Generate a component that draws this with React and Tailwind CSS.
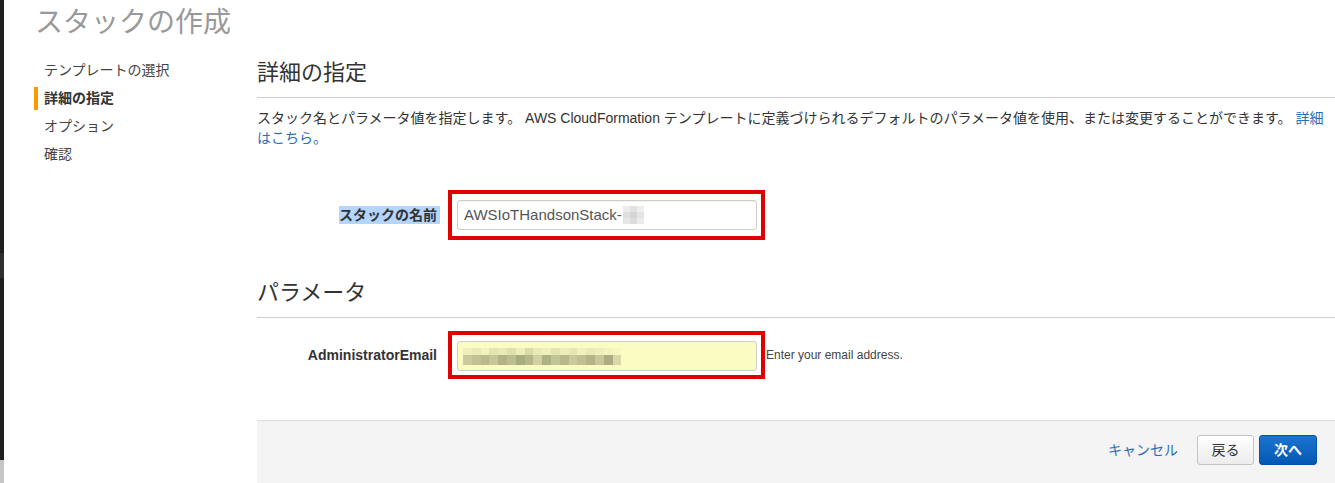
import React from "react"

const stackBlocks = [
  ["#ececec", "#e2e2e2", "#eeeeee"],
  ["#dedede", "#d4d4d4", "#e4e4e4"],
  ["#e6e6e6", "#dcdcdc", "#ebebeb"],
]

const emailTop = [
  "#eef0bb", "#e9ebb6", "#f1f3bd", "#e4e6b0", "#e8eab4", "#dfe1ab", "#eceeb8", "#d9dba6",
  "#e9ebb5", "#eef0ba", "#e3e5af", "#ecedb8", "#e6e8b2", "#f0f2bc", "#e8eab4", "#edefb9",
  "#f2f4be", "#f5f7c0",
]

const emailBottom = [
  "#c9cb9c", "#c0c294", "#b9bb8d", "#c5c798", "#b2b487", "#bcbe90", "#a9ab80", "#b6b88a",
  "#cfd1a2", "#aeb085", "#c3c597", "#b7b98b", "#c8ca9b", "#bfc193", "#b3b588", "#c6c899",
  "#aaac81", "#d6d8aa",
]

function RedFrame({ children, className }) {
  return (
    <div className={`border-4 border-[#e00000] pl-[5px] pr-[4px] ${className}`}>
      {children}
    </div>
  )
}

function Sidebar() {
  const items = ["テンプレートの選択", "詳細の指定", "オプション", "確認"]
  return (
    <aside className="w-[253px] shrink-0 pl-[30px] pt-[15px]">
      {items.map((item, i) => (
        <div key={item} className="flex h-[28px] items-center">
          <div className={`h-[23px] w-[4px] ${i === 1 ? "bg-[#f90]" : ""}`}></div>
          <span
            className={`pl-[6px] text-[14px] leading-[28px] ${
              i === 1 ? "font-bold text-[#333]" : "text-[#444]"
            }`}
          >
            {item}
          </span>
        </div>
      ))}
    </aside>
  )
}

function SectionTitle({ children, className }) {
  return (
    <div className={`border-b border-[#ccc] pb-[9px] ${className}`}>
      <h2 className="text-[22px] leading-[30px] text-[#333]">{children}</h2>
    </div>
  )
}

export default function App() {
  return (
    <div className="flex min-h-[483px] w-[1335px] overflow-hidden bg-white font-['Liberation_Sans','Noto_Sans_CJK_JP',sans-serif]">
      {/* window edge */}
      <div className="flex w-[4px] shrink-0 flex-col">
        <div className="h-[253px] bg-[#1f1f1f]"></div>
        <div className="h-[25px] bg-[#2f2f2f]"></div>
        <div className="h-[182px] bg-[#1f1f1f]"></div>
        <div className="flex-1 bg-[#c6c6c6]"></div>
      </div>

      <div className="flex flex-1 flex-col">
        <h1 className="pl-[31px] pt-[5px] text-[28px] leading-[36px] text-[#999]">スタックの作成</h1>

        <div className="flex flex-1">
          <Sidebar />

          <main className="flex flex-1 flex-col">
            <SectionTitle className="mt-[17px]">詳細の指定</SectionTitle>

            <p className="mt-[10px] pr-[8px] text-[14px] leading-[20px] text-[#333]">
              スタック名とパラメータ値を指定します。 AWS CloudFormation
              テンプレートに定義づけられるデフォルトのパラメータ値を使用、または変更することができます。{" "}
              <a className="text-[#2a6ebb]">
                詳細
                <br />
                はこちら。
              </a>
            </p>

            {/* stack name */}
            <div className="mt-[42px] flex items-center">
              <div className="flex w-[183px] justify-end">
                <span className="bg-[#b4d5fe] pr-[3px] text-[14px] font-bold leading-[18px] text-[#333]">
                  スタックの名前
                </span>
              </div>
              <RedFrame className="ml-[8px] py-[6px]">
                <div className="flex h-[30px] w-[300px] items-center rounded-[3px] border border-[#ccc] bg-white pl-[6px] shadow-[inset_0_1px_1px_rgba(0,0,0,0.05)]">
                  <span className="text-[15px] text-[#555]">AWSIoTHandsonStack-</span>
                  <div className="ml-[1px] flex flex-col">
                    {stackBlocks.map((row, r) => (
                      <div key={r} className="flex">
                        {row.map((c, k) => (
                          <div key={k} className="h-[6px] w-[7px]" style={{ backgroundColor: c }}></div>
                        ))}
                      </div>
                    ))}
                  </div>
                </div>
              </RedFrame>
            </div>

            <SectionTitle className="mt-[38px]">パラメータ</SectionTitle>

            {/* email */}
            <div className="mt-[13px] flex items-center">
              <div className="w-[183px] pr-[3px] text-right text-[14px] font-bold text-[#333]">
                AdministratorEmail
              </div>
              <RedFrame className="ml-[8px] pb-[4px] pt-[6px]">
                <div className="flex h-[30px] w-[300px] items-center rounded-[3px] border border-[#ccc] bg-[#fafcc2] pl-[5px]">
                  <div className="flex flex-col">
                    <div className="flex">
                      {emailTop.map((c, k) => (
                        <div key={k} className="h-[7px] w-[8.8px]" style={{ backgroundColor: c }}></div>
                      ))}
                    </div>
                    <div className="flex">
                      {emailBottom.map((c, k) => (
                        <div key={k} className="h-[10px] w-[8.8px]" style={{ backgroundColor: c }}></div>
                      ))}
                    </div>
                  </div>
                </div>
              </RedFrame>
              <span className="ml-[1px] text-[12px] text-[#444]">Enter your email address.</span>
            </div>

            {/* footer */}
            <footer className="mt-[41px] flex h-[63px] items-start justify-end border-t border-[#ddd] bg-[#f4f4f4] pr-[18px] pt-[14px]">
              <a className="mr-[19px] flex h-[30px] items-center text-[14px] text-[#2b6cb5]">キャンセル</a>
              <button className="h-[30px] w-[57px] rounded-[3px] border border-[#c4c4c4] bg-gradient-to-b from-white to-[#ececec] text-[14px] text-[#333]">
                戻る
              </button>
              <button className="ml-[5px] h-[30px] w-[58px] rounded-[3px] border border-[#0552a8] bg-gradient-to-b from-[#1b74d1] to-[#0458b2] text-[14px] font-bold text-white">
                次へ
              </button>
            </footer>
          </main>
        </div>
      </div>
    </div>
  )
}
